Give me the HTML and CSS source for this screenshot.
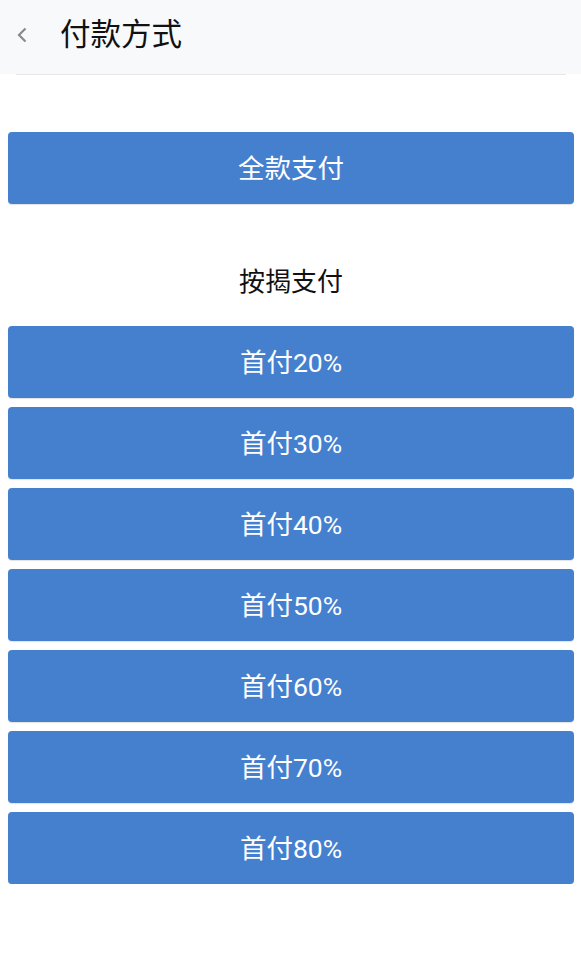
FILE: index.html
```html
<!DOCTYPE html>
<html lang="zh">
<head>
<meta charset="utf-8">
<link rel="stylesheet" href="styles.css">
</head>
<body>
<header class="topbar">
  <svg class="back" width="12" height="18" viewBox="0 0 12 18"><path d="M9.5 2.5 L3 9 L9.5 15.5" fill="none" stroke="#8a8a8a" stroke-width="2.2"/></svg>
  <h1 class="title">付款方式</h1>
</header>
<div class="divider"></div>
<main class="content">
  <button class="pay">全款支付</button>
  <div class="label">按揭支付</div>
  <div class="list">
    <button class="pay">首付20%</button>
    <button class="pay">首付30%</button>
    <button class="pay">首付40%</button>
    <button class="pay">首付50%</button>
    <button class="pay">首付60%</button>
    <button class="pay">首付70%</button>
    <button class="pay">首付80%</button>
  </div>
</main>
</body>
</html>
```
FILE: styles.css
```css
html, body { margin: 0; padding: 0; background: #fff; }
body { font-family: Roboto, "Noto Sans CJK SC", sans-serif; width: 581px; }
.topbar {
  height: 74px;
  background: #f8f9fb;
  display: flex;
  align-items: center;
  padding: 0 0 4px 16px;
  box-sizing: border-box;
}
.back { display: block; margin-right: 32px; }
.title {
  margin: 0;
  font-size: 30.5px;
  font-weight: 400;
  color: #111;
  line-height: 1;
}
.divider { height: 1px; margin: 0 15px 0 16px; background: #e6e7ea; }
.content { padding: 57px 7px 0 8px; display: flex; flex-direction: column; }
.pay {
  display: block;
  width: 100%;
  height: 72px;
  border: none;
  border-radius: 4px;
  background: #4580cf;
  color: #fff;
  font-family: Roboto, "Noto Sans CJK SC", sans-serif;
  font-size: 26.5px;
  padding: 0 0 3px;
  box-shadow: 0 1px 1px rgba(0,0,0,0.12);
}
.label {
  text-align: center;
  font-size: 26px;
  color: #111;
  height: 122px;
  line-height: 156px;
  box-sizing: border-box;
}
.list { display: flex; flex-direction: column; gap: 9px; }
```
